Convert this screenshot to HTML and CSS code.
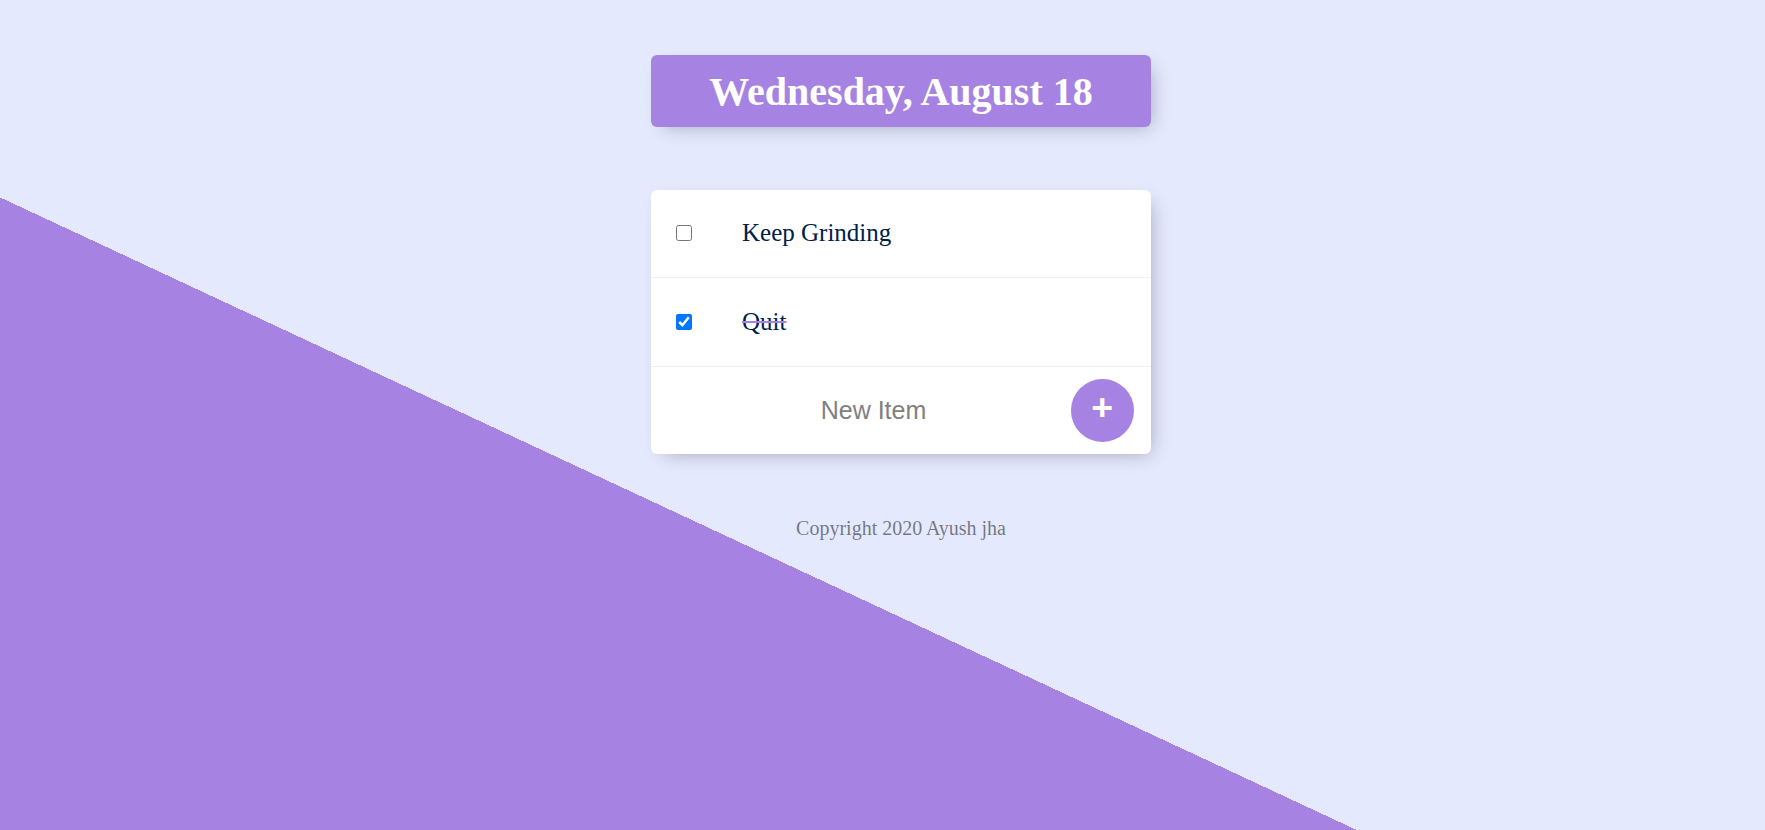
FILE: index.html
```html
<!DOCTYPE html>
<html lang="en">
<head>
<meta charset="utf-8">
<title>To-Do List</title>
<link rel="stylesheet" href="styles.css">
</head>
<body>
<div class="page">
  <div class="box heading">
    <h1>Wednesday, August 18</h1>
  </div>
  <div class="box">
    <div class="item">
      <input class="check" type="checkbox">
      <p class="text">Keep Grinding</p>
    </div>
    <div class="item">
      <input class="check" type="checkbox" checked>
      <p class="text done">Quit</p>
    </div>
    <form class="item add-form">
      <input class="new-input" type="text" placeholder="New Item" autocomplete="off">
      <button class="add-btn" type="button">+</button>
    </form>
  </div>
  <footer class="footer">Copyright 2020 Ayush jha</footer>
</div>
</body>
</html>
```

FILE: styles.css
```css
html {
  background-color: #E4E9FD;
  background-image: linear-gradient(25deg, #A683E3 50%, #E4E9FD 50%);
  background-size: 1802px 1235px;
  background-repeat: no-repeat;
  background-position: 0 0;
}

body {
  margin: 0;
  font-family: "Liberation Serif", "Times New Roman", serif;
}

.page {
  padding: 55px 0 0 37px;
}

.box {
  width: 500px;
  margin: 0 auto 62.5px;
  background: #fff;
  border-radius: 6px;
  box-shadow: 6.25px 6.25px 18.75px -6.25px rgba(0, 0, 0, 0.3);
}

.heading {
  background-color: #A683E3;
  text-align: center;
}

.heading h1 {
  margin: 0;
  padding: 12.5px;
  color: #fff;
  font-size: 40px;
  font-weight: bold;
  line-height: 47px;
}

.item {
  min-height: 87.5px;
  display: flex;
  align-items: center;
  border-bottom: 1px solid #F1F1F1;
}

.item:last-child {
  border-bottom: 0;
}

.check {
  width: 16px;
  height: 16px;
  margin: 25px;
  flex: none;
}

.text {
  margin: 0;
  padding: 25px;
  font-size: 25px;
  font-weight: normal;
  color: #00204a;
}

.done {
  text-decoration: line-through;
  text-decoration-color: #A683E3;
}

.add-form {
  margin: 0 0 0 25px;
  text-align: center;
}

.new-input {
  text-align: center;
  height: 75px;
  border: none;
  background: transparent;
  font-family: "Liberation Sans", Arial, sans-serif;
  font-size: 25px;
  width: 391px;
  padding: 1px 2px;
  box-sizing: content-box;
  outline: none;
}

.new-input::placeholder {
  color: grey;
  opacity: 1;
}

.add-btn {
  min-height: 62.5px;
  width: 62.5px;
  border-radius: 50%;
  border: 0;
  background-color: #A683E3;
  color: #fff;
  font-family: "Liberation Sans", Arial, sans-serif;
  font-size: 37.5px;
  font-weight: bold;
  line-height: 1;
  padding: 0 0 6px;
  flex: none;
}

.footer {
  color: rgba(0, 0, 0, 0.5);
  text-align: center;
  font-size: 20px;
}
```
